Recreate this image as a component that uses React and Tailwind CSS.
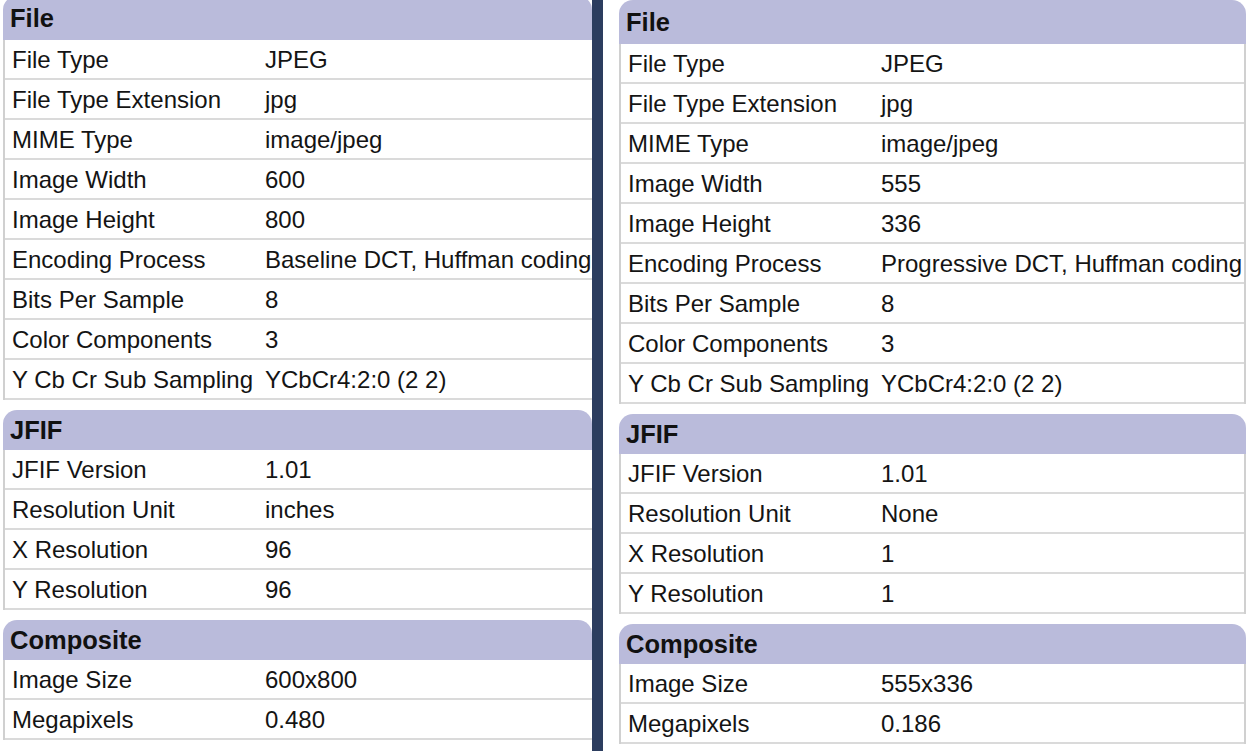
import React from "react";

const left = [
  {
    title: "File",
    first: true,
    rows: [
      ["File Type", "JPEG"],
      ["File Type Extension", "jpg"],
      ["MIME Type", "image/jpeg"],
      ["Image Width", "600"],
      ["Image Height", "800"],
      ["Encoding Process", "Baseline DCT, Huffman coding"],
      ["Bits Per Sample", "8"],
      ["Color Components", "3"],
      ["Y Cb Cr Sub Sampling", "YCbCr4:2:0 (2 2)"],
    ],
  },
  {
    title: "JFIF",
    rows: [
      ["JFIF Version", "1.01"],
      ["Resolution Unit", "inches"],
      ["X Resolution", "96"],
      ["Y Resolution", "96"],
    ],
  },
  {
    title: "Composite",
    rows: [
      ["Image Size", "600x800"],
      ["Megapixels", "0.480"],
    ],
  },
];

const right = [
  {
    title: "File",
    first: true,
    rows: [
      ["File Type", "JPEG"],
      ["File Type Extension", "jpg"],
      ["MIME Type", "image/jpeg"],
      ["Image Width", "555"],
      ["Image Height", "336"],
      ["Encoding Process", "Progressive DCT, Huffman coding"],
      ["Bits Per Sample", "8"],
      ["Color Components", "3"],
      ["Y Cb Cr Sub Sampling", "YCbCr4:2:0 (2 2)"],
    ],
  },
  {
    title: "JFIF",
    rows: [
      ["JFIF Version", "1.01"],
      ["Resolution Unit", "None"],
      ["X Resolution", "1"],
      ["Y Resolution", "1"],
    ],
  },
  {
    title: "Composite",
    rows: [
      ["Image Size", "555x336"],
      ["Megapixels", "0.186"],
    ],
  },
];

function Section({ s, noRight }) {
  return (
    <div className="flex flex-col">
      <div
        className={
          "bg-[#babbdb] rounded-t-[14px] flex items-center pl-[7px] pt-[1px] text-[25.5px] font-bold text-[#111] " +
          (s.first ? "h-[44px]" : "h-[40px]")
        }
      >
        {s.title}
      </div>
      <div
        className={
          "border-l-2 border-[#d0d0d0] bg-white " +
          (noRight ? "" : "border-r-2")
        }
      >
        {s.rows.map(([k, v]) => (
          <div
            key={k}
            className="h-[40px] flex items-center pt-[2px] border-b-2 border-[#dadada] text-[24px] text-[#141414] whitespace-nowrap overflow-hidden"
          >
            <div className="w-[259px] shrink-0 pl-[7px]">{k}</div>
            <div className="pl-[1px]">{v}</div>
          </div>
        ))}
      </div>
    </div>
  );
}

function Panel({ data, noRight }) {
  return (
    <div className="flex flex-col gap-[10px]">
      {data.map((s) => (
        <Section key={s.title} s={s} noRight={noRight} />
      ))}
    </div>
  );
}

export default function App() {
  return (
    <div
      className="w-[1250px] h-[751px] bg-white flex overflow-hidden"
      style={{ fontFamily: '"Liberation Sans", Arial, sans-serif' }}
    >
      <div className="w-[592px] pl-[3px] -mt-[4px] shrink-0 overflow-hidden">
        <Panel data={left} noRight />
      </div>
      <div className="w-[11px] bg-[#2c3d5f] shrink-0" />
      <div className="w-[16px] shrink-0" />
      <div className="w-[627px] shrink-0">
        <Panel data={right} />
      </div>
    </div>
  );
}
